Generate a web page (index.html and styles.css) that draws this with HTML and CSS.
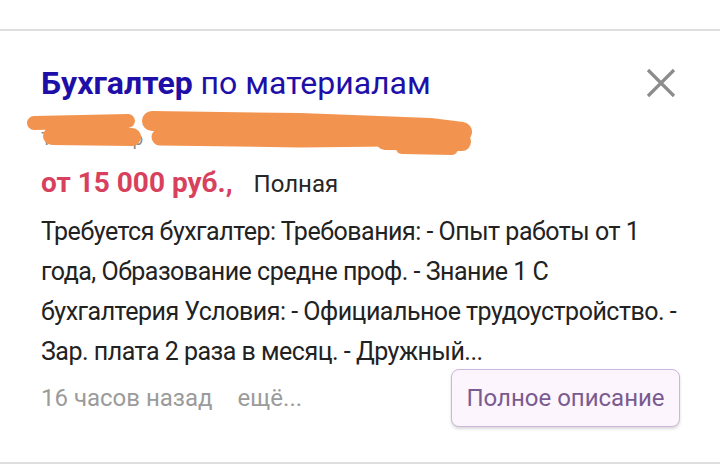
FILE: index.html
```html
<!DOCTYPE html>
<html lang="ru">
<head>
<meta charset="utf-8">
<link rel="stylesheet" href="styles.css">
</head>
<body>
<div class="top"></div>
<div class="card">
  <div class="head">
    <h1 class="title"><b>Бухгалтер</b> по материалам</h1>
    <svg class="close" width="30" height="30" viewBox="0 0 30 30"><path d="M2 2 L28 28 M28 2 L2 28" stroke="#8c8c8c" stroke-width="3.2" fill="none"/></svg>
  </div>
  <div class="company">
    <span class="company-text">Т&nbsp;&nbsp;&nbsp;&nbsp;&nbsp;&nbsp;&nbsp;&nbsp;&nbsp;&nbsp;&nbsp;&nbsp;&nbsp;&nbsp;&nbsp;&nbsp;&nbsp;р</span>
    <svg class="scribble" width="480" height="60" viewBox="0 0 480 60">
      <g stroke="#f2944f" stroke-linecap="round" stroke-linejoin="round" fill="none">
        <path d="M34 17 L128 15" stroke-width="14"/>
        <path d="M52 30 L132 31" stroke-width="18"/>
        <path d="M152 15 L300 17 L430 22 L462 26" stroke-width="20"/>
        <path d="M160 31 L300 33 L390 32" stroke-width="17"/>
        <path d="M385 35 L462 36" stroke-width="18"/>
        <path d="M402 42 L452 43" stroke-width="12"/>
      </g>
    </svg>
  </div>
  <div class="salary"><span class="amount">от 15 000 руб.,</span><span class="type">Полная</span></div>
  <p class="desc">Требуется бухгалтер: Требования: - Опыт работы от 1 года, Образование средне проф. - Знание 1 С бухгалтерия Условия: - Официальное трудоустройство. - Зар. плата 2 раза в месяц. - Дружный...</p>
  <div class="footer">
    <span class="time">16 часов назад</span>
    <span class="more">ещё...</span>
    <button class="btn">Полное описание</button>
  </div>
</div>
<div class="bottom"></div>
</body>
</html>
```
FILE: styles.css
```css
html, body {
  margin: 0;
  padding: 0;
  background: #fff;
  font-family: Roboto, "Noto Sans", sans-serif;
}
body {
  width: 720px;
  height: 470px;
  overflow: hidden;
}
.top {
  height: 29px;
  border-bottom: 2px solid #dedede;
}
.card {
  padding: 33px 41px 0 41px;
}
.head {
  display: flex;
  justify-content: space-between;
  align-items: flex-start;
}
.title {
  margin: 0;
  font-size: 32px;
  line-height: 38px;
  font-weight: 400;
  color: #1e0fa8;
}
.title b {
  font-weight: 700;
}
.close {
  margin-top: 4px;
  margin-right: 3px;
}
.company {
  position: relative;
  height: 64px;
}
.company-text {
  display: block;
  padding-top: 26px;
  font-size: 19px;
  line-height: 22px;
  color: #8f8f8f;
}
.scribble {
  position: absolute;
  left: -41px;
  top: 4px;
}
.salary {
  display: flex;
  align-items: baseline;
  gap: 21px;
  line-height: 34px;
}
.amount {
  font-size: 28px;
  font-weight: 700;
  color: #d8415d;
}
.type {
  font-size: 24px;
  color: #262626;
}
.desc {
  margin: 11px 0 0 0;
  max-width: 640px;
  font-size: 25px;
  line-height: 40px;
  letter-spacing: -0.5px;
  color: #222;
}
.footer {
  display: flex;
  align-items: center;
  margin-top: -3px;
}
.time, .more {
  font-size: 24px;
  color: #9b9b9b;
}
.more {
  margin-left: 25px;
}
.btn {
  margin-left: auto;
  margin-right: -1px;
  width: 229px;
  height: 58px;
  padding: 0;
  border: 1.5px solid #cdb6db;
  border-radius: 8px;
  background: #fcf5fd;
  color: #7a5b90;
  font-family: Roboto, "Noto Sans", sans-serif;
  font-size: 24px;
  box-shadow: 0 2px 3px rgba(0,0,0,0.15);
}
.bottom {
  margin-top: 35px;
  border-top: 2px solid #dedede;
}
```
